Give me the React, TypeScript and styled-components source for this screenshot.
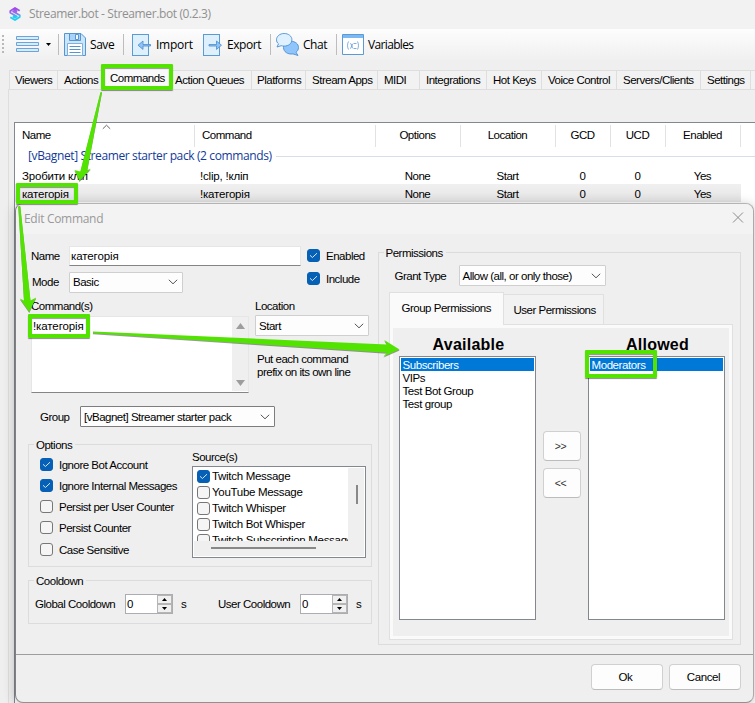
import React from "react";
import styled, { createGlobalStyle, css } from "styled-components";

const GlobalStyle = createGlobalStyle`
  *, *::before, *::after { box-sizing: border-box; }
  body { margin: 0; background: #efefef; }
`;

const sans = `"Liberation Sans", Arial, sans-serif`;
const ui = `"Open Sans", "Noto Sans", sans-serif`;
const green = "#52e300";

const Window = styled.div`
  position: relative;
  display: flex;
  flex-direction: column;
  width: 755px;
  height: 703px;
  overflow: hidden;
  background: #efefef;
  color: #000;
  font: 11.5px/14px ${sans};
  letter-spacing: -0.49px;
  white-space: nowrap;
`;

const TitleBar = styled.header`
  display: flex;
  align-items: center;
  gap: 7px;
  height: 29px;
  padding: 0 0 2px 8px;
  background: #f2f2f2;
  color: #909090;
  font: 12px/16px ${ui};
  letter-spacing: -0.38px;
`;

const Toolbar = styled.nav`
  display: flex;
  align-items: center;
  height: 31px;
  margin-bottom: 6px;
  background: linear-gradient(#fdfdfd, #f0f0f0);
  font: 12px/16px ${ui};
  letter-spacing: -0.4px;
`;

const Grip = styled.div`
  width: 2px;
  height: 19px;
  margin: 0 12px 0 2px;
  background: repeating-linear-gradient(#b9b9b9 0 2px, transparent 2px 4px);
`;

const MenuButton = styled.div`
  display: flex;
  align-items: center;
  gap: 7px;
  width: 42px;
`;

const Tool = styled.div<{ $w: number; $ls?: number; $pad?: number }>`
  display: flex;
  align-items: center;
  gap: 4px;
  width: ${(p) => p.$w}px;
  padding-left: ${(p) => p.$pad ?? 5}px;
  letter-spacing: ${(p) => p.$ls ?? -0.45}px;
  svg { flex: none; }
`;

const Divider = styled.div`
  width: 1px;
  height: 21px;
  background: #bdbdbd;
`;

const TabStrip = styled.div`
  display: flex;
  align-items: flex-end;
  height: 23px;
  padding-left: 9px;
`;

const Tab = styled.div<{ $w: number; $active?: boolean; $pad?: number }>`
  flex: none;
  width: ${(p) => p.$w}px;
  height: ${(p) => (p.$active ? 23 : 19)}px;
  padding: 2px 0 0 ${(p) => p.$pad ?? 6}px;
  border: 1px solid #dedede;
  border-width: 1px 0 0 1px;
  background: ${(p) => (p.$active ? "#f9f9f9" : "#f2f2f2")};
  line-height: 14px;
  ${(p) => p.$active && css`padding-top: 4px;`}
`;

const TabPage = styled.main`
  flex: 1;
  margin-left: 8px;
  padding: 32px 0 0 3px;
  border: 1px solid #dedede;
  border-width: 1px 0 0 1px;
`;

const PageEdge = styled.div`
  height: 100%;
  padding-left: 2px;
`;

const ListView = styled.section`
  height: 100%;
  border: 1px solid #828790;
  border-width: 1px 0 0 1px;
  background: #fff;
`;

const columns = "180px 181px 85px 95px 55px 55px 75px 1fr";

const HeaderRow = styled.div`
  display: grid;
  grid-template-columns: ${columns};
  height: 24px;
  padding-top: 2px;
`;

const HeaderCell = styled.div<{ $left?: boolean }>`
  position: relative;
  padding: ${(p) => (p.$left ? "3px 0 0 7px" : "3px 1px 0 0")};
  border-right: 1px solid #e2e2e2;
  text-align: ${(p) => (p.$left ? "left" : "center")};
  &:last-child { border: 0; }
`;

const SortMark = styled.svg`
  position: absolute;
  left: 87px;
  top: -1px;
`;

const GroupHeading = styled.div`
  display: flex;
  align-items: center;
  gap: 4px;
  height: 19px;
  padding: 0 0 1px 13px;
  color: #123a9a;
  font: 12px/16px ${ui};
  letter-spacing: -0.38px;
  &::after { content: ""; flex: 1; height: 1px; background: #d7deea; }
`;

const DataRow = styled.div<{ $selected?: boolean }>`
  display: grid;
  grid-template-columns: ${columns};
  width: 726px;
  height: 18px;
  line-height: 20px;
  background: ${(p) => (p.$selected ? "linear-gradient(#f0f0f0, #e4e4e4)" : "#fff")};
`;

const Cell = styled.div<{ $left?: number }>`
  padding: 0 ${(p) => (p.$left ? 0 : 2)}px 0 ${(p) => p.$left ?? 0}px;
  text-align: ${(p) => (p.$left ? "left" : "center")};
  letter-spacing: ${(p) => (p.$left ? -0.2 : -0.49)}px;
`;

const Dialog = styled.section`
  position: absolute;
  left: 15px;
  top: 203px;
  display: flex;
  flex-direction: column;
  width: 739px;
  height: 500px;
  border: 1px solid #a9a9a9;
  border-color: #b4b4b4 #aaa #909090 #808080;
  border-radius: 8px;
  background: #efefef;
  box-shadow: 0 2px 12px rgba(0, 0, 0, 0.25);
`;

const DialogTitle = styled.div`
  display: flex;
  justify-content: space-between;
  height: 30px;
  padding: 7px 9px 0 8px;
  border-radius: 8px 8px 0 0;
  background: #f3f3f3;
  color: #999;
  font: 12px/16px ${ui};
  letter-spacing: -0.3px;
`;

const DialogBody = styled.div`
  display: flex;
  height: 420px;
  padding: 12px 12px 0;
`;

const FormColumn = styled.div`
  width: 344px;
  margin-right: 6px;
`;

const TopForm = styled.div`
  display: flex;
  height: 51px;
`;

const Fields = styled.div`
  width: 279px;
  padding-left: 3px;
`;

const FieldRow = styled.div<{ $gap?: number }>`
  display: flex;
  align-items: center;
  height: 20px;
  margin-bottom: ${(p) => p.$gap ?? 0}px;
`;

const FieldLabel = styled.span<{ $w: number; $pad?: number }>`
  width: ${(p) => p.$w}px;
  padding-left: ${(p) => p.$pad ?? 0}px;
  flex: none;
`;

const TextField = styled.div`
  width: 232px;
  height: 20px;
  padding: 2px 0 0 1px;
  border: 1px solid #e6e6e6;
  border-bottom-color: #858585;
  background: #fff;
  letter-spacing: -0.1px;
`;

const Combo = styled.div<{ $w: number; $strong?: boolean }>`
  display: flex;
  align-items: center;
  justify-content: space-between;
  flex: none;
  width: ${(p) => p.$w}px;
  height: 21px;
  padding: 0 4px 0 3px;
  border: 1px solid ${(p) => (p.$strong ? "#7d7d7d" : "#cfcfcf")};
  border-radius: 1px;
  background: #fdfdfd;
`;

const ChecksColumn = styled.div`
  padding-top: 3px;
`;

const CheckRow = styled.div<{ $h: number }>`
  display: flex;
  align-items: flex-start;
  gap: 6px;
  height: ${(p) => p.$h}px;
  line-height: 14px;
`;

const Box = styled.span<{ $on?: boolean }>`
  display: flex;
  align-items: center;
  justify-content: center;
  flex: none;
  width: 13px;
  height: 13px;
  border: 1px solid ${(p) => (p.$on ? "#0560b6" : "#777")};
  border-radius: 3px;
  background: ${(p) => (p.$on ? "#0560b6" : "#f5f5f5")};
`;

const CommandArea = styled.div`
  display: flex;
  gap: 6px;
  height: 109px;
  padding: 2px 0 0 3px;
`;

const Commands = styled.div`
  width: 218px;
`;

const TextArea = styled.div`
  display: flex;
  justify-content: space-between;
  width: 218px;
  height: 77px;
  margin-top: 3px;
  padding: 0 0 1px;
  border: 1px solid #e6e6e6;
  border-bottom-color: #858585;
  background: #fff;
`;

const AreaText = styled.div`
  padding: 2px 0 0 1px;
  letter-spacing: -0.1px;
`;

const AreaScroll = styled.div`
  display: flex;
  flex-direction: column;
  align-items: center;
  justify-content: space-between;
  width: 16px;
  padding: 6px 0 5px;
  background: #efefef;
`;

const Location = styled.div`
  display: flex;
  flex-direction: column;
  gap: 2px;
`;

const Hint = styled.p`
  margin: 15px 0 0 2px;
  line-height: 13px;
`;

const GroupRow = styled.div`
  display: flex;
  align-items: center;
  height: 21px;
  padding-left: 12px;
`;

const GroupBox = styled.fieldset<{ $h: number }>`
  position: relative;
  min-width: 0;
  height: ${(p) => p.$h}px;
  margin: 0;
  padding: 0;
  border: 1px solid #dcdcdc;
`;

const Legend = styled.div`
  position: absolute;
  left: 5px;
  top: -7px;
  padding: 0 3px 0 2px;
  background: #efefef;
`;

const OptionsGrid = styled.div`
  display: flex;
  padding-left: 11px;
`;

const OptionChecks = styled.div`
  width: 152px;
  padding-top: 13px;
`;

const Sources = styled.div`
  padding-top: 5px;
`;

const SourceList = styled.div`
  display: grid;
  grid-template: 73px 1fr / 154px 1fr;
  width: 174px;
  height: 92px;
  margin-top: 2px;
  padding: 1px;
  border: 1px solid #828790;
  background: #fff;
`;

const SourceItems = styled.div`
  overflow: hidden;
  padding: 0 0 0 3px;
`;

const SourceItem = styled.div`
  display: flex;
  align-items: center;
  gap: 2px;
  height: 16px;
  letter-spacing: -0.3px;
`;

const VerticalTrack = styled.div`
  padding: 17px 0 0 8px;
  background: #efefef;
  &::after { content: ""; display: block; width: 2px; height: 19px; background: #888; }
`;

const HorizontalTrack = styled.div`
  grid-column: 1 / 3;
  padding: 6px 0 0 17px;
  background: #efefef;
  &::after { content: ""; display: block; width: 105px; height: 2px; background: #888; }
`;

const CooldownRow = styled.div`
  display: flex;
  align-items: center;
  padding: 13px 0 0 6px;
`;

const Spinner = styled.div`
  display: flex;
  justify-content: space-between;
  width: 48px;
  height: 20px;
  padding-left: 1px;
  border: 1px solid #abadb3;
  background: #fff;
  line-height: 18px;
`;

const SpinButtons = styled.div`
  display: grid;
  grid-template-rows: 1fr 1fr;
  width: 15px;
`;

const SpinButton = styled.div`
  display: flex;
  align-items: center;
  justify-content: center;
  border: 1px solid #b5b5b5;
  background: #f0f0f0;
`;

const Unit = styled.span<{ $w: number }>`
  width: ${(p) => p.$w}px;
  padding-left: 8px;
`;

const PermissionsBox = styled(GroupBox)`
  width: 364px;
  margin-top: 6px;
  padding: 12px 0 0 10px;
`;

const GrantRow = styled.div`
  display: flex;
  align-items: center;
  height: 21px;
  padding-left: 6px;
`;

const PermissionTabs = styled.div`
  display: flex;
  align-items: flex-end;
  height: 32px;
  margin-top: 6px;
`;

const PermissionTab = styled.div<{ $active?: boolean; $w: number }>`
  width: ${(p) => p.$w}px;
  height: ${(p) => (p.$active ? 33 : 30)}px;
  padding: ${(p) => (p.$active ? "8px 0 0 12px" : "8px 0 0 10px")};
  margin-bottom: ${(p) => (p.$active ? -1 : 0)}px;
  border: 1px solid #e0e0e0;
  border-bottom: 0;
  border-left-width: ${(p) => (p.$active ? 1 : 0)}px;
  background: ${(p) => (p.$active ? "#fafafa" : "#f2f2f2")};
  z-index: ${(p) => (p.$active ? 1 : 0)};
`;

const PermissionPage = styled.div`
  display: flex;
  width: 344px;
  height: 316px;
  padding: 7px 0 0 6px;
  border: 1px solid #e0e0e0;
  box-shadow: inset 0 0 0 3px #fafafa;
`;

const ListColumn = styled.div`
  display: flex;
  flex-direction: column;
  align-items: center;
  width: 137px;
  margin-left: 3px;
`;

const ListHeading = styled.h2`
  margin: 2px 0 1px 3px;
  font: bold 16px/21px ${sans};
  letter-spacing: 0.25px;
`;

const ListBox = styled.div`
  width: 137px;
  height: 264px;
  padding: 1px;
  border: 1px solid #828790;
  background: #fff;
`;

const ListItem = styled.div<{ $selected?: boolean }>`
  height: 13px;
  padding-left: 2px;
  background: ${(p) => (p.$selected ? "#0078d7" : "#fff")};
  color: ${(p) => (p.$selected ? "#fff" : "#000")};
  line-height: 14px;
  letter-spacing: -0.42px;
`;

const MoveButtons = styled.div`
  display: flex;
  flex-direction: column;
  gap: 7px;
  width: 49px;
  padding: 99px 0 0 7px;
`;

const Button = styled.button<{ $w: number; $h: number }>`
  width: ${(p) => p.$w}px;
  height: ${(p) => p.$h}px;
  padding: 0 3px 0 0;
  border: 1px solid #d0d0d0;
  border-bottom-color: #bcbcbc;
  border-radius: 4px;
  background: #fdfdfd;
  color: #000;
  font: 11.5px/14px ${sans};
  letter-spacing: -0.4px;
`;

const MoveButton = styled(Button)`
  padding: 0 2px 0 0;
  color: #333;
  font-size: 10.5px;
`;

const Footer = styled.footer`
  display: flex;
  justify-content: flex-end;
  gap: 6px;
  height: 48px;
  padding: 9px 12px 0;
  border-top: 1px solid #9d9d9d;
`;

const Highlight = styled.div<{ $x: number; $y: number; $w: number; $h: number }>`
  position: absolute;
  left: ${(p) => p.$x}px;
  top: ${(p) => p.$y}px;
  width: ${(p) => p.$w}px;
  height: ${(p) => p.$h}px;
  border: 4px solid ${green};
  border-radius: 1px;
  box-shadow: 0 1px 1px rgba(0, 0, 0, 0.45), inset 0 1px 1px rgba(0, 0, 0, 0.4);
`;

const Arrows = styled.svg`
  position: absolute;
  left: 0;
  top: 0;
  filter: drop-shadow(0 1px 0.6px rgba(0, 0, 0, 0.4));
`;

const GroupSpacer = styled.div<{ $h?: number }>`
  height: ${(p) => p.$h ?? 17}px;
`;

const Chevron = () => (
  <svg width="10" height="6" viewBox="0 0 10 6" fill="none" stroke="#555">
    <path d="M.8.8 5 4.8 9.2.8" />
  </svg>
);

const Mark = ({ on }: { on?: boolean }) => (
  <Box $on={on}>
    {on && (
      <svg width="9" height="7" viewBox="0 0 9 7" fill="none" stroke="#d5e6f7">
        <path d="M1 3.3 3.4 5.5 8 1.2" />
      </svg>
    )}
  </Box>
);

const Check = ({ label, on, h = 21 }: { label: string; on?: boolean; h?: number }) => (
  <CheckRow $h={h}>
    <Mark on={on} />
    {label}
  </CheckRow>
);

const Triangle = ({ down, w, h, color }: { down?: boolean; w: number; h: number; color: string }) => (
  <svg width={w} height={h} viewBox="0 0 10 6" preserveAspectRatio="none" fill={color}>
    <path d={down ? "M0 0H10L5 6Z" : "M0 6H10L5 0Z"} />
  </svg>
);

const NumberBox = () => (
  <Spinner>
    0
    <SpinButtons>
      <SpinButton><Triangle w={5} h={3} color="#000" /></SpinButton>
      <SpinButton><Triangle down w={5} h={3} color="#000" /></SpinButton>
    </SpinButtons>
  </Spinner>
);

const Logo = () => (
  <svg width="14" height="16" viewBox="0 0 14 16" fill="none" strokeWidth="1.9" strokeLinejoin="round">
    <defs>
      <linearGradient id="logo" gradientUnits="userSpaceOnUse" x1="0" y1="1" x2="0" y2="15">
        <stop offset=".1" stopColor="#a646e8" />
        <stop offset=".5" stopColor="#8f7bea" />
        <stop offset=".68" stopColor="#24cdf0" />
      </linearGradient>
    </defs>
    <g stroke="url(#logo)">
      <path d="M9.200 5.600 7 4.400 5.200 5.500 11.700 9.300V11L7 14 2.300 11.200" />
      <path d="M4.800 10.400 7 11.600 8.800 10.500 2.300 6.700V5L7 2 11.700 4.800" />
    </g>
  </svg>
);

const FileArrow = ({ out }: { out?: boolean }) => (
  <svg width="20" height="22" viewBox="0 0 20 22">
    <rect x=".5" y=".5" width="16" height="21" fill="#dff0fd" stroke="#5b9bd5" />
    {out ? (
      <path d="M6 10.500h7.500V7l5 4.200-5 4.200v-3.400H6z" fill="#8fc3f5" stroke="#4a8ccc" strokeWidth=".8" />
    ) : (
      <path d="M18.500 10.500H11V7l-5 4.200 5 4.200v-3.400h7.500z" fill="#8fc3f5" stroke="#4a8ccc" strokeWidth=".8" />
    )}
  </svg>
);

const rows = [
  ["Зробити кліп", "!clip, !кліп"],
  ["категорія", "!категорія"],
];

const tabs: [string, number, number, boolean?][] = [
  ["Viewers", 48, 5],
  ["Actions", 45, 6],
  ["Commands", 68, 7, true],
  ["Action Queues", 81, 4],
  ["Platforms", 54, 5],
  ["Stream Apps", 72, 6],
  ["MIDI", 42, 6],
  ["Integrations", 67, 6],
  ["Hot Keys", 55, 6],
  ["Voice Control", 75, 6],
  ["Servers/Clients", 84, 6],
  ["Settings", 50, 6],
  ["", 20, 6],
];

export default function App() {
  return (
    <Window>
      <GlobalStyle />
      <TitleBar>
        <Logo />
        Streamer.bot - Streamer.bot (0.2.3)
      </TitleBar>
      <Toolbar>
        <Grip />
        <MenuButton>
          <svg width="23" height="17" viewBox="0 0 23 17" fill="#d9ecfc" stroke="#6ba4dc">
            <path d="M.5.5h22v3H.5zM.5 6.5h22v3H.5zM.5 12.5h22v3H.5z" />
          </svg>
          <Triangle down w={5} h={3} color="#000" />
        </MenuButton>
        <Divider />
        <Tool $w={64}>
          <svg width="22" height="23" viewBox="0 0 22 23">
            <path d="M.5.5H17l4.500 4.500v17.500H.5z" fill="#cbe5fb" stroke="#5795d1" />
            <path d="M5.500.5h11v7h-11z" fill="#a9d2f8" stroke="#5795d1" />
            <path d="M11.500 1.500h3v5h-3z" fill="#eef7ff" stroke="#5795d1" />
            <path d="M3.500 10.500h15v12h-15z" fill="#fff" stroke="#7fb0e0" />
            <path d="M5.500 13.500h11M5.500 16.500h11M5.500 19.500h11" stroke="#5795d1" />
          </svg>
          Save
        </Tool>
        <Divider />
        <Tool $w={72} $ls={-0.25} $pad={8}>
          <FileArrow />
          Import
        </Tool>
        <Tool $w={74} $pad={7}>
          <FileArrow out />
          Export
        </Tool>
        <Divider />
        <Tool $w={65}>
          <svg width="23" height="23" viewBox="0 0 23 23" strokeWidth=".9" stroke="#4b91d2">
            <path d="M15 8.3c4.200 0 7.500 2.600 7.500 6.200 0 2-1 3.700-2.500 4.800l2 3.200-5-1.600c-5.300.8-9.500-2.200-9.500-6.400 0-3.600 3.400-6.200 7.500-6.200z" fill="#8fc5fb" />
            <path d="M8.200.5c4.300 0 7.700 2.700 7.700 6.300s-3.400 6.300-7.700 6.300c-1 0-2-.1-3-.4L1 14l1.500-3.200C1.200 9.800.5 8.400.5 6.800.5 3.200 3.900.5 8.200.5z" fill="#dff1ff" />
          </svg>
          Chat
        </Tool>
        <Divider />
        <Tool $w={90} $ls={-0.65}>
          <svg width="22" height="21" viewBox="0 0 22 21" fill="none" stroke="#5b9bd5">
            <path d="M.5.5h21v20H.5z" fill="#fff" />
            <path d="M1 1h20v3H1z" fill="#7cb9f3" stroke="none" />
            <path d="M6.500 7.500c-1.300 2.300-1.300 5.700 0 8M15.500 7.500c1.300 2.300 1.300 5.700 0 8M8 9.500c3 0 1 5 3.500 5M11.500 9.500c-2 0-1.500 5-3.500 5M12 9.500h2.500M12 14.500h2.500" strokeWidth=".8" />
          </svg>
          Variables
        </Tool>
      </Toolbar>
      <TabStrip>
        {tabs.map(([label, w, pad, active], i) => (
          <Tab key={i} $w={w} $active={active} $pad={pad}>
            {label}
          </Tab>
        ))}
      </TabStrip>
      <TabPage>
        <PageEdge>
          <ListView>
            <HeaderRow>
              <HeaderCell $left>
                Name
                <SortMark width="9" height="6" viewBox="0 0 9 6" fill="none" stroke="#666">
                  <path d="M.8 4.800 4.500 1.200 8.200 4.800" />
                </SortMark>
              </HeaderCell>
              <HeaderCell $left>Command</HeaderCell>
              {["Options", "Location", "GCD", "UCD", "Enabled", ""].map((h) => (
                <HeaderCell key={h}>{h}</HeaderCell>
              ))}
            </HeaderRow>
            <GroupHeading>[vBagnet] Streamer starter pack (2 commands)</GroupHeading>
            {rows.map(([name, command], i) => (
              <DataRow key={name} $selected={i === 1}>
                <Cell $left={7}>{name}</Cell>
                <Cell $left={5}>{command}</Cell>
                <Cell>None</Cell>
                <Cell>Start</Cell>
                <Cell>0</Cell>
                <Cell>0</Cell>
                <Cell>Yes</Cell>
              </DataRow>
            ))}
          </ListView>
        </PageEdge>
      </TabPage>

      <Dialog>
        <DialogTitle>
          Edit Command
          <svg width="12" height="12" viewBox="0 0 12 12" stroke="#8b8b8b">
            <path d="M1 1.500 11 11.500M11 1.500 1 11.500" />
          </svg>
        </DialogTitle>
        <DialogBody>
          <FormColumn>
            <TopForm>
              <Fields>
                <FieldRow $gap={6}>
                  <FieldLabel $w={38}>Name</FieldLabel>
                  <TextField>категорія</TextField>
                </FieldRow>
                <FieldRow>
                  <FieldLabel $w={38} $pad={1}>Mode</FieldLabel>
                  <Combo $w={114}>Basic<Chevron /></Combo>
                </FieldRow>
              </Fields>
              <ChecksColumn>
                <Check label="Enabled" on h={23} />
                <Check label="Include" on />
              </ChecksColumn>
            </TopForm>
            <CommandArea>
              <Commands>
                Command(s)
                <TextArea>
                  <AreaText>!категорія</AreaText>
                  <AreaScroll>
                    <Triangle w={9} h={6} color="#9d9d9d" />
                    <Triangle down w={9} h={6} color="#9d9d9d" />
                  </AreaScroll>
                </TextArea>
              </Commands>
              <Location>
                Location
                <Combo $w={114}>Start<Chevron /></Combo>
                <Hint>Put each command<br />prefix on its own line</Hint>
              </Location>
            </CommandArea>
            <GroupRow>
              <FieldLabel $w={40}>Group</FieldLabel>
              <Combo $w={195} $strong>[vBagnet] Streamer starter pack<Chevron /></Combo>
            </GroupRow>
            <GroupSpacer />
            <GroupBox $h={123}>
              <Legend>Options</Legend>
              <OptionsGrid>
                <OptionChecks>
                  <Check label="Ignore Bot Account" on />
                  <Check label="Ignore Internal Messages" on />
                  <Check label="Persist per User Counter" />
                  <Check label="Persist Counter" h={22} />
                  <Check label="Case Sensitive" />
                </OptionChecks>
                <Sources>
                  Source(s)
                  <SourceList>
                    <SourceItems>
                      <SourceItem><Mark on />Twitch Message</SourceItem>
                      <SourceItem><Mark />YouTube Message</SourceItem>
                      <SourceItem><Mark />Twitch Whisper</SourceItem>
                      <SourceItem><Mark />Twitch Bot Whisper</SourceItem>
                      <SourceItem><Mark />Twitch Subscription Message</SourceItem>
                    </SourceItems>
                    <VerticalTrack />
                    <HorizontalTrack />
                  </SourceList>
                </Sources>
              </OptionsGrid>
            </GroupBox>
            <GroupSpacer $h={13} />
            <GroupBox $h={44}>
              <Legend>Cooldown</Legend>
              <CooldownRow>
                <FieldLabel $w={90}>Global Cooldown</FieldLabel>
                <NumberBox />
                <Unit $w={45}>s</Unit>
                <FieldLabel $w={82}>User Cooldown</FieldLabel>
                <NumberBox />
                <Unit $w={20}>s</Unit>
              </CooldownRow>
            </GroupBox>
          </FormColumn>
          <PermissionsBox $h={393}>
            <Legend>Permissions</Legend>
            <GrantRow>
              <FieldLabel $w={64}>Grant Type</FieldLabel>
              <Combo $w={147}>Allow (all, or only those)<Chevron /></Combo>
            </GrantRow>
            <PermissionTabs>
              <PermissionTab $active $w={115}>Group Permissions</PermissionTab>
              <PermissionTab $w={100}>User Permissions</PermissionTab>
            </PermissionTabs>
            <PermissionPage>
              <ListColumn>
                <ListHeading>Available</ListHeading>
                <ListBox>
                  <ListItem $selected>Subscribers</ListItem>
                  <ListItem>VIPs</ListItem>
                  <ListItem>Test Bot Group</ListItem>
                  <ListItem>Test group</ListItem>
                </ListBox>
              </ListColumn>
              <MoveButtons>
                <MoveButton $w={38} $h={30}>&gt;&gt;</MoveButton>
                <MoveButton $w={38} $h={30}>&lt;&lt;</MoveButton>
              </MoveButtons>
              <ListColumn>
                <ListHeading>Allowed</ListHeading>
                <ListBox>
                  <ListItem $selected>Moderators</ListItem>
                </ListBox>
              </ListColumn>
            </PermissionPage>
          </PermissionsBox>
        </DialogBody>
        <Footer>
          <Button $w={72} $h={26}>Ok</Button>
          <Button $w={72} $h={26}>Cancel</Button>
        </Footer>
      </Dialog>

      <Highlight $x={101} $y={64} $w={72} $h={26} />
      <Highlight $x={16} $y={183} $w={62} $h={21} />
      <Highlight $x={28} $y={314} $w={62} $h={24} />
      <Highlight $x={585} $y={350} $w={72} $h={28} />
      <Arrows width="755" height="703" viewBox="0 0 755 703" fill={green}>
        <path d="M100.500 92 102 92 87.300 170 90.800 168.800 79.500 181 74.500 170 80.300 171.500Z" />
        <path d="M18.300 206 20.300 206 30.500 300.500 36.200 297.500 29.300 312 19.800 298.500 24 300.500Z" />
        <path d="M93 331.500 387 344.500 384.300 340 399.500 349.500 383.500 356.500 387 352.800 93 333.200Z" />
      </Arrows>
    </Window>
  );
}
